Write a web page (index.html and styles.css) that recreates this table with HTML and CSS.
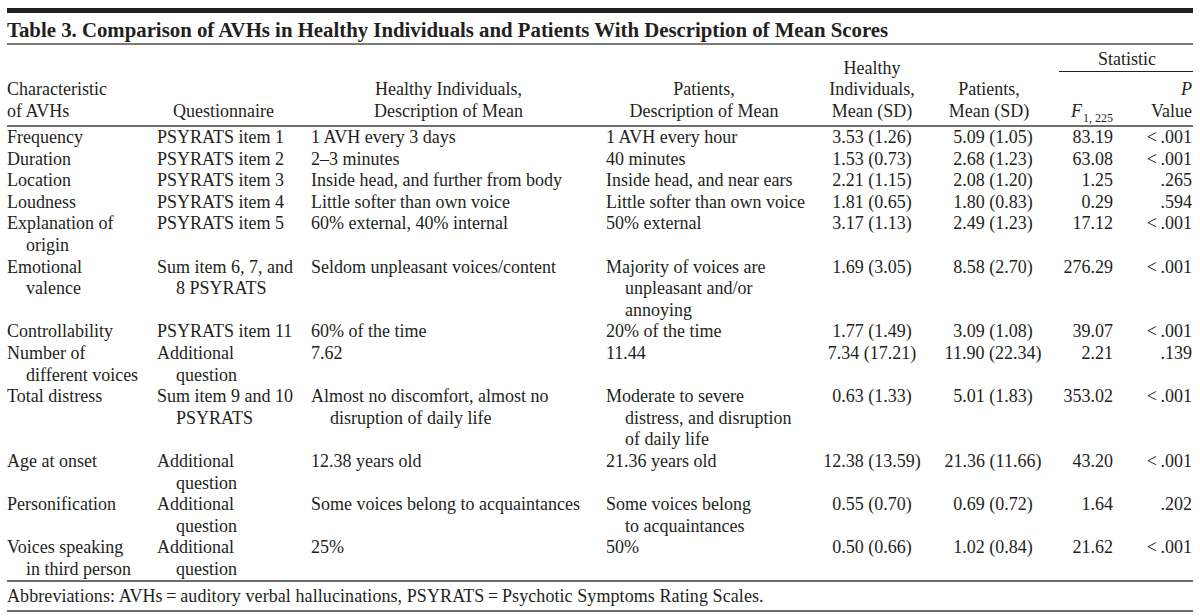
FILE: index.html
```html
<!DOCTYPE html>
<html lang="en">
<head>
<meta charset="utf-8">
<title>Table 3</title>
<link rel="stylesheet" href="styles.css">
</head>
<body>
<div class="page">
  <div class="topbar"></div>
  <h1 class="title">Table 3. Comparison of AVHs in Healthy Individuals and Patients With Description of Mean Scores</h1>
  <table class="tbl">
    <colgroup>
      <col class="c1"><col class="c2"><col class="c3"><col class="c4"><col class="c5"><col class="c6"><col class="c7"><col class="c8">
    </colgroup>
    <thead>
      <tr class="hr1">
        <th rowspan="2" class="hl">Characteristic<br>of AVHs</th>
        <th rowspan="2" class="hq">Questionnaire</th>
        <th rowspan="2" class="hhd">Healthy Individuals,<br>Description of Mean</th>
        <th rowspan="2" class="hpd">Patients,<br>Description of Mean</th>
        <th rowspan="2" class="hc">Healthy<br>Individuals,<br>Mean (SD)</th>
        <th rowspan="2" class="hpm">Patients,<br>Mean (SD)</th>
        <th colspan="2" class="hstat"><div class="stat-label">Statistic</div></th>
      </tr>
      <tr class="hr2">
        <th class="hf"><i>F</i><sub>1, 225</sub></th>
        <th class="hp"><i>P</i><br>Value</th>
      </tr>
    </thead>
    <tbody>
      <tr>
        <td class="t">Frequency</td><td class="t">PSYRATS item 1</td><td class="t">1 AVH every 3 days</td><td class="t">1 AVH every hour</td>
        <td class="m">3.53 (1.26)</td><td class="pm">5.09 (1.05)</td><td class="f">83.19</td><td class="p">&lt;&thinsp;.001</td>
      </tr>
      <tr>
        <td class="t">Duration</td><td class="t">PSYRATS item 2</td><td class="t">2–3 minutes</td><td class="t">40 minutes</td>
        <td class="m">1.53 (0.73)</td><td class="pm">2.68 (1.23)</td><td class="f">63.08</td><td class="p">&lt;&thinsp;.001</td>
      </tr>
      <tr>
        <td class="t">Location</td><td class="t">PSYRATS item 3</td><td class="t">Inside head, and further from body</td><td class="t">Inside head, and near ears</td>
        <td class="m">2.21 (1.15)</td><td class="pm">2.08 (1.20)</td><td class="f">1.25</td><td class="p">.265</td>
      </tr>
      <tr>
        <td class="t">Loudness</td><td class="t">PSYRATS item 4</td><td class="t">Little softer than own voice</td><td class="t">Little softer than own voice</td>
        <td class="m">1.81 (0.65)</td><td class="pm">1.80 (0.83)</td><td class="f">0.29</td><td class="p">.594</td>
      </tr>
      <tr>
        <td class="t">Explanation of<br>origin</td><td class="t">PSYRATS item 5</td><td class="t">60% external, 40% internal</td><td class="t">50% external</td>
        <td class="m">3.17 (1.13)</td><td class="pm">2.49 (1.23)</td><td class="f">17.12</td><td class="p">&lt;&thinsp;.001</td>
      </tr>
      <tr>
        <td class="t">Emotional<br>valence</td><td class="t">Sum item 6, 7, and<br>8 PSYRATS</td><td class="t">Seldom unpleasant voices/content</td><td class="t">Majority of voices are<br>unpleasant and/or<br>annoying</td>
        <td class="m">1.69 (3.05)</td><td class="pm">8.58 (2.70)</td><td class="f">276.29</td><td class="p">&lt;&thinsp;.001</td>
      </tr>
      <tr>
        <td class="t">Controllability</td><td class="t">PSYRATS item 11</td><td class="t">60% of the time</td><td class="t">20% of the time</td>
        <td class="m">1.77 (1.49)</td><td class="pm">3.09 (1.08)</td><td class="f">39.07</td><td class="p">&lt;&thinsp;.001</td>
      </tr>
      <tr>
        <td class="t">Number of<br>different voices</td><td class="t">Additional<br>question</td><td class="t">7.62</td><td class="t">11.44</td>
        <td class="m">7.34 (17.21)</td><td class="pm">11.90 (22.34)</td><td class="f">2.21</td><td class="p">.139</td>
      </tr>
      <tr>
        <td class="t">Total distress</td><td class="t">Sum item 9 and 10<br>PSYRATS</td><td class="t">Almost no discomfort, almost no<br>disruption of daily life</td><td class="t">Moderate to severe<br>distress, and disruption<br>of daily life</td>
        <td class="m">0.63 (1.33)</td><td class="pm">5.01 (1.83)</td><td class="f">353.02</td><td class="p">&lt;&thinsp;.001</td>
      </tr>
      <tr>
        <td class="t">Age at onset</td><td class="t">Additional<br>question</td><td class="t">12.38 years old</td><td class="t">21.36 years old</td>
        <td class="m">12.38 (13.59)</td><td class="pm">21.36 (11.66)</td><td class="f">43.20</td><td class="p">&lt;&thinsp;.001</td>
      </tr>
      <tr>
        <td class="t">Personification</td><td class="t">Additional<br>question</td><td class="t">Some voices belong to acquaintances</td><td class="t">Some voices belong<br>to acquaintances</td>
        <td class="m">0.55 (0.70)</td><td class="pm">0.69 (0.72)</td><td class="f">1.64</td><td class="p">.202</td>
      </tr>
      <tr class="last">
        <td class="t">Voices speaking<br>in third person</td><td class="t">Additional<br>question</td><td class="t">25%</td><td class="t">50%</td>
        <td class="m">0.50 (0.66)</td><td class="pm">1.02 (0.84)</td><td class="f">21.62</td><td class="p">&lt;&thinsp;.001</td>
      </tr>
    </tbody>
  </table>
  <p class="note">Abbreviations: AVHs&thinsp;=&thinsp;auditory verbal hallucinations, PSYRATS&thinsp;=&thinsp;Psychotic Symptoms Rating Scales.</p>
</div>
</body>
</html>
```

FILE: styles.css
```css
* {
  box-sizing: border-box;
}

html, body {
  margin: 0;
  padding: 0;
  background: #ffffff;
}

body {
  color: #231f20;
  font-family: "Liberation Serif", "Times New Roman", serif;
  font-size: 18px;
}

.page {
  width: 1186px;
  margin: 0 7px;
  padding-top: 8px;
}

.topbar {
  height: 5px;
  background: #231f20;
}

.title {
  margin: 4px 0 0;
  font-size: 20.8px;
  line-height: 26px;
  font-weight: bold;
  border-bottom: 2px solid #7a7a7a;
}

.tbl {
  width: 1186px;
  table-layout: fixed;
  border-collapse: separate;
  border-spacing: 0;
  line-height: 21.6px;
}

.c1 { width: 150px; }
.c2 { width: 154px; }
.c3 { width: 295px; }
.c4 { width: 200px; }
.c5 { width: 132px; }
.c6 { width: 114px; }
.c7 { width: 61px; }
.c8 { width: 80px; }

.tbl th {
  font-weight: normal;
  vertical-align: bottom;
  padding: 0 0 2.4px;
  white-space: nowrap;
  border-bottom: 2px solid #6e6e6e;
}

.tbl .hr1 th.hstat {
  border-bottom: none;
  padding: 4px 0 2.4px 7px;
  text-align: center;
  height: 29px;
}

.stat-label {
  border-bottom: 1px solid #231f20;
  padding-left: 2px;
}

.tbl .hr2 th {
  padding-top: 3.4px;
  height: 53px;
}

.hl { text-align: left; }
.hq { text-align: left; padding-left: 16px !important; }
.hhd { text-align: center; padding-right: 20px !important; }
.hpd { text-align: center; padding-right: 4px !important; }
.hc { text-align: center; }
.hpm { text-align: center; padding-right: 12px !important; }
.hf { text-align: right; }
.hp { text-align: right; padding-right: 1px !important; }

.hf sub {
  font-size: 12px;
  line-height: 0;
  vertical-align: -5px;
  margin-left: 1px;
}

.tbl td {
  padding: 0;
  vertical-align: top;
  white-space: nowrap;
}

.tbl tr.last td {
  padding-bottom: 0;
  border-bottom: 2px solid #6e6e6e;
}

.t {
  text-align: left;
  padding-left: 19px !important;
  text-indent: -19px;
}

.m {
  text-align: center;
}

.pm {
  text-align: center;
  padding-right: 4px !important;
}

.f {
  text-align: right;
}

.p {
  text-align: right;
  padding-right: 1px !important;
}

.note {
  margin: 0;
  padding: 4px 0 2px;
  line-height: 21.6px;
  letter-spacing: 0.08px;
  border-bottom: 2px solid #6e6e6e;
}
```
